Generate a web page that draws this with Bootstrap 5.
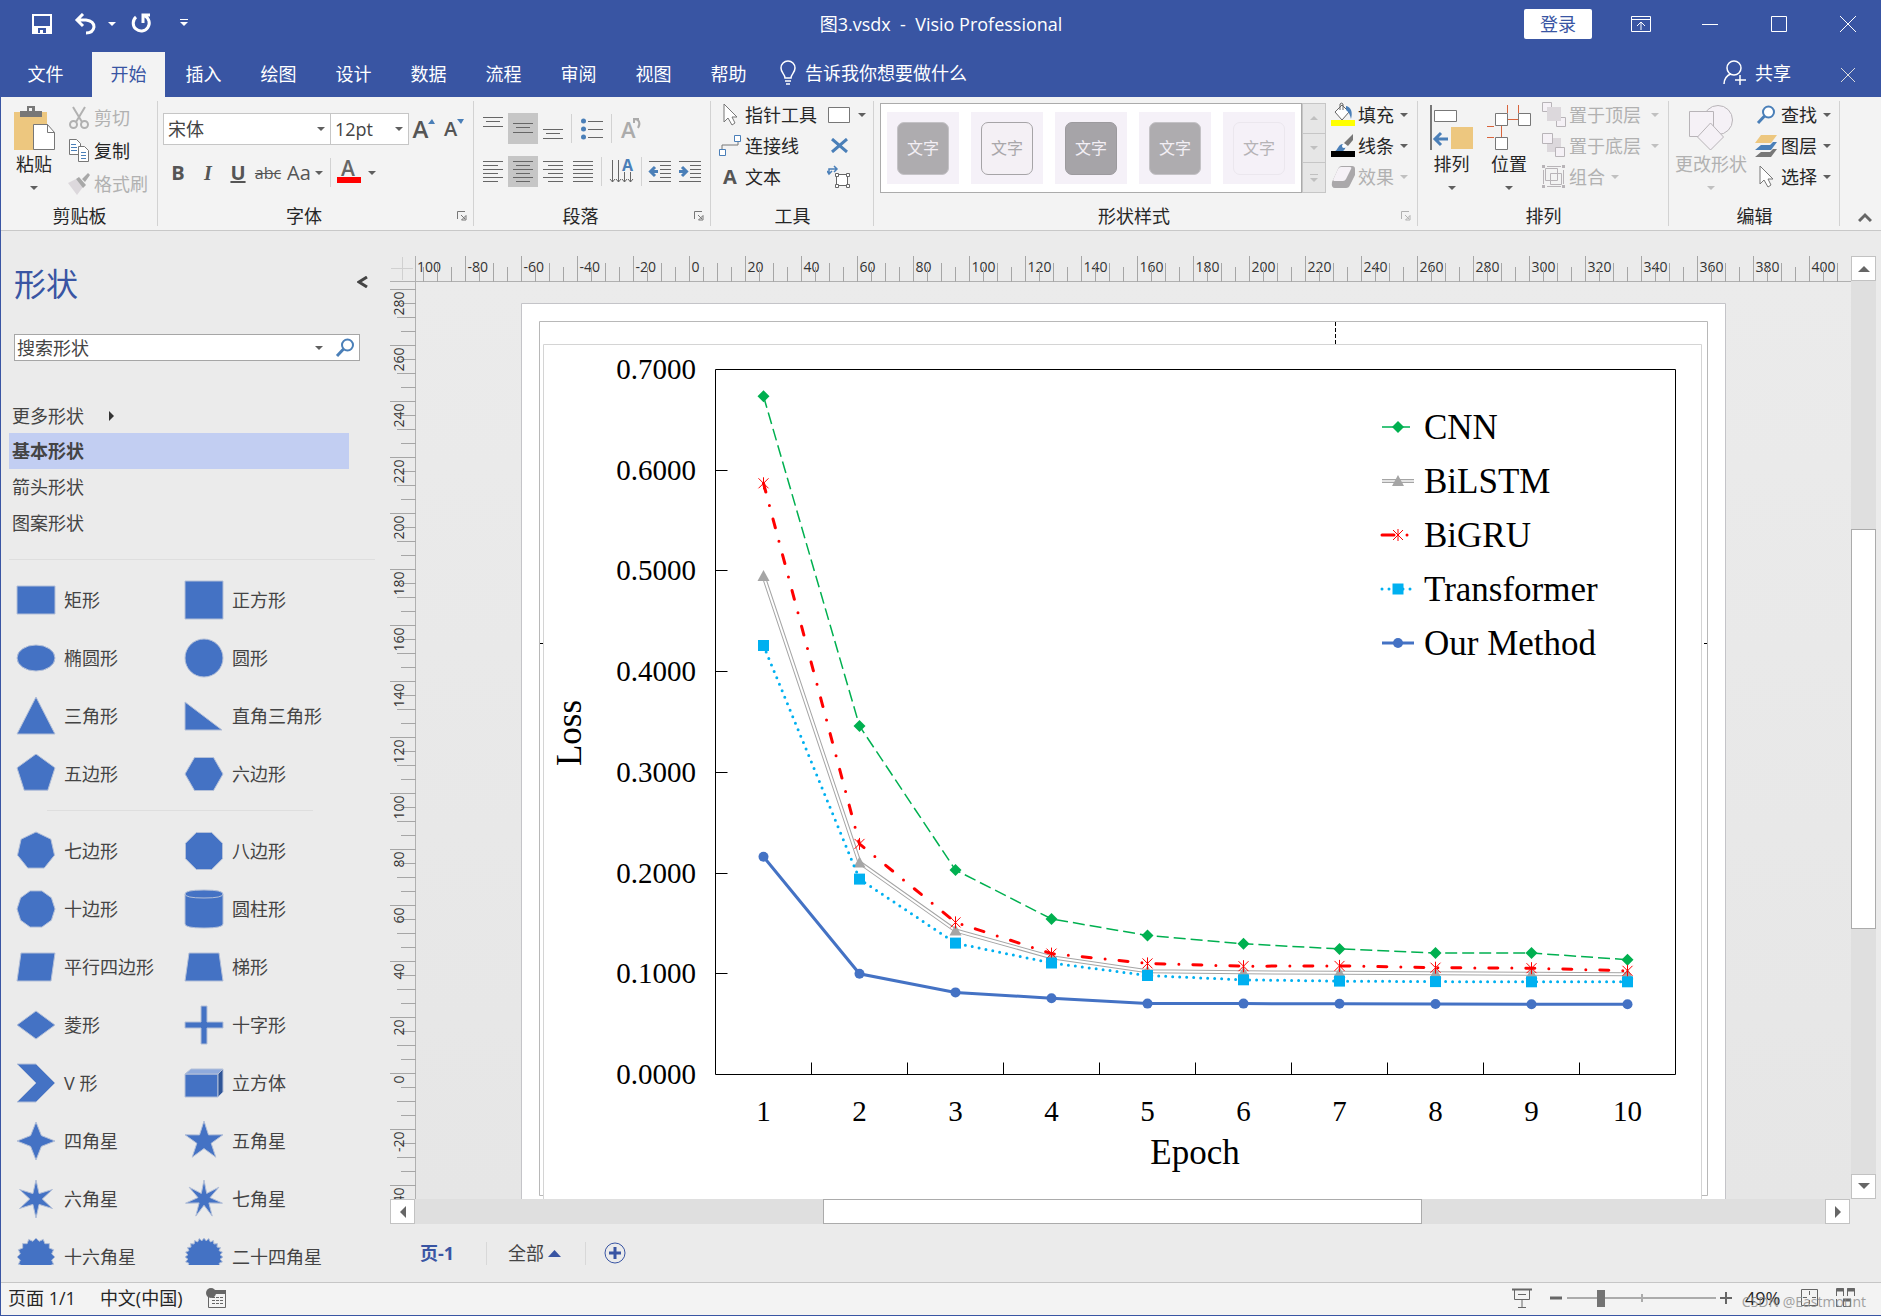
<!DOCTYPE html>
<html lang="zh-CN">
<head>
<meta charset="utf-8">
<meta name="viewport" content="width=device-width, initial-scale=1">
<title>图3.vsdx - Visio Professional</title>
<link href="https://cdn.jsdelivr.net/npm/bootstrap@5.3.0/dist/css/bootstrap.min.css" rel="stylesheet">
<style>
:root{--brand:#3955a3;--line:#c8c8c8;--ink:#262626;--off:#b1b1b1;--icon:#666}
body{font-family:"Open Sans","Noto Sans CJK SC",sans-serif;font-size:18px;line-height:24px;color:var(--ink);background:#ebebeb}
svg{display:block;flex:none}
.app{border-left:1px solid var(--brand);border-bottom:1px solid var(--brand);overflow:hidden}
.plain{background:none;border:0;padding:0;color:inherit;display:flex;align-items:center;white-space:nowrap}
.plain:disabled{color:var(--off)}
/* title bar and tabs */
.chrome{background:var(--brand);color:#fff}
.titlebar{height:52px;padding-bottom:4px}
.doc-title{font-size:18px}
.quick{width:500px;padding-left:31px}
.wins{width:500px}
.login{background:#fff;color:var(--brand);width:68px;height:30px;border-radius:2px;justify-content:center;margin-right:14px}
.winbtn{width:69px;justify-content:center}
.winbtn:last-child{margin-right:-1px}
.tabs .nav-link{width:73px;height:45px;padding:0 0 2px;display:flex;align-items:center;justify-content:center;color:#fff;border-radius:0}
.tabs .nav-link.active{background:#f3f3f3;color:var(--brand)}
.tabs{gap:2px;padding-left:8px}
.tabs .file-tab{margin-right:8px}
/* ribbon */
.ribbon{background:#f3f3f3;border-bottom:1px solid var(--line);height:134px}
.grp{position:relative;display:flex;flex-direction:column;flex:none}
.grp::after{content:"";position:absolute;right:0;top:4px;bottom:4px;width:1px;background:#d2d2d2}
.grp-body{height:107px;display:flex}
.grp-label{height:24px;display:flex;align-items:center}
.grp-label span{flex:1;text-align:center}
.launch{width:24px;height:24px;justify-content:center}
.caret{width:0;height:0;border:4px solid transparent;border-top-color:#5f5f5f;border-bottom-width:0;flex:none}
.caret.up{border-top-width:0;border-bottom:4px solid #5f5f5f}
:disabled .caret{border-top-color:#c0c0c0}
:disabled .caret.up{border-bottom-color:#c0c0c0}
.rows3{padding-top:2px}
.rows3 .plain{height:31px}
.rows-clip{padding-top:4px}
.rows-clip .plain{height:33px}
.ico{width:24px;display:flex;justify-content:center;flex:none;margin-right:3px}
.big{flex-direction:column;padding-top:8px;align-self:flex-start}
.big svg{height:45px}
.big span{margin:2px 0 10px}
.combo{height:32px;border:1px solid #c6c6c6;background:#fff;display:flex;align-items:center;padding:0 5px 0 4px}
.combo+.combo{margin-left:-1px}
.combo select{appearance:none;border:0;background:none;flex:1;min-width:0;padding:0;color:#444;outline:0}
.tool{width:30px;height:31px;justify-content:center}
.tool svg{overflow:visible}
.tool.on{background:#c6c6c6}
.tool.wide{width:33px}
.vsep{width:1px;height:29px;background:#d2d2d2;margin:0 3px;align-self:center}
.fmt{color:#555;font-weight:700;font-size:20px}
.gallery{height:90px;margin-top:6px;border:1px solid #ababab;background:#fff;padding:8px 6px;gap:12px;overflow:hidden}
.swatch{width:72px;height:72px;background:#f5f1f8;flex:none;justify-content:center}
.swatch span{width:52px;height:53px;border-radius:7px;display:flex;align-items:center;justify-content:center;font-size:16px;color:#f3eff5;background:#aeacaf;border:1px solid #c4c2c6}
.swatch .line{background:#f4f0f5;border-color:#a6a4a7;color:#a9a7aa}
.swatch .dark{background:#a6a4a8;border-color:#9c9a9e}
.swatch .ghost{background:none;border-color:#ebe7ee;color:#b5b3b6}
.gscroll{margin-top:6px;width:24px;height:90px}
.gscroll button{flex:1;justify-content:center;background:#e6e6e6;border:1px solid #c6c6c6;margin-top:-1px;flex-direction:column;gap:3px}
.gscroll button:first-child{margin-top:0}
.gscroll .bar{width:8px;height:1px;background:#c0c0c0}
/* shapes panel */
.panel{width:389px;flex:none;color:#444}
.panel h1{font-size:32px;line-height:38px;font-weight:400;color:var(--brand);margin:0}
.search{margin:31px 30px 38px 13px;height:28px;border:1px solid #a6a6a6;background:#fff;padding:0 4px 0 2px}
.search input{border:0;padding:0;background:none;flex:1;min-width:0;color:#444;outline:0;height:24px}
.search input::placeholder{color:#444;opacity:1}
.stencil a{display:flex;align-items:center;height:36px;padding-left:3px;color:#444;text-decoration:none}
.stencil a:first-child{height:34px}
.stencil a.current{background:#c2cef2;font-weight:700}
.stencil{margin:0 41px 0 8px}
.rule{height:1px;background:#dedede}
.shapes{overflow:hidden;min-height:0;margin-bottom:17px;padding:11px 0 0 15px}
.shape{width:168px;height:58px;gap:8px}
.shape-grid{width:336px}
/* drawing area */
.ruler-text{font-size:14px;fill:#333}
.canvas{background:linear-gradient(#ebebeb,#e6e6e6)}
.chart-text{font-family:"Liberation Serif",serif;font-size:29px;fill:#000}
.chart-big{font-size:35px}
.track{background:#dfdfdf}
.sbtn{background:#fff;border:1px solid #c2c2c2;width:25px;height:25px;justify-content:center;flex:none}
.thumb{background:#fff;border:1px solid #ababab}
.pages{height:58px;padding-left:30px}
.pages i{width:1px;height:23px;background:#d8d8d8}
/* status bar */
.status{height:33px;background:#f3f3f3;border-top:1px solid #c6c6c6;padding:0 0 2px 7px}
.zoomer{appearance:none;width:149px;height:18px;background:linear-gradient(#ababab,#ababab) 0 8px/100% 2px no-repeat,linear-gradient(#ababab,#ababab) 74px 5px/2px 8px no-repeat}
.zoomer::-webkit-slider-thumb{appearance:none;width:8px;height:17px;background:#737373}
.credit{position:absolute;right:15px;bottom:3px;font-size:14px;line-height:20px;color:#8c8c8c;opacity:.8}
</style>
<script src="https://cdn.jsdelivr.net/npm/bootstrap@5.3.0/dist/js/bootstrap.bundle.min.js"></script>
</head>
<body>
<svg width="0" height="0" class="position-absolute">
  <symbol id="launcher" viewBox="0 0 10 10"><path d="M.5 8V.5H8M4 4l4 4M9 4.500V9H4.500z" fill="none" stroke="currentColor"/></symbol>
  <symbol id="cursor" viewBox="0 0 16 24"><path d="M2 1v18l4-4 4 7 3-2-3-6h5z" fill="#fff" stroke="#777"/></symbol>
  <symbol id="lens" viewBox="0 0 20 20"><circle cx="12.500" cy="7" r="5.500" fill="#fff" stroke="#4a7fb8" stroke-width="2"/><path d="M8.500 11 2 18" stroke="#4a7fb8" stroke-width="3"/></symbol>
</svg>
<div class="app vh-100 d-flex flex-column">

  <header class="chrome flex-shrink-0">
    <div class="titlebar d-flex align-items-center justify-content-between">
      <div class="quick d-flex align-items-center">
        <button class="plain" aria-label="保存"><svg width="20" height="20"><path d="M1 1h18v18H1z" fill="none" stroke="#fff" stroke-width="2"/><path d="M2 12h16v7H2z" fill="#fff"/><path d="M6 14h8v5h-3v-3H8v3H6z" fill="#3955a3"/><path d="M8 16h3v3H8z" fill="#fff"/></svg></button>
        <button class="plain" style="margin-left:22px" aria-label="撤消"><svg width="22" height="22"><path d="M3 7h9q8 1 8 7-1 6-8 6M9 1 3 7l6 6" fill="none" stroke="#fff" stroke-width="3"/></svg></button>
        <span class="caret" style="border-top-color:#fff;margin-left:12px"></span>
        <button class="plain" style="margin-left:14px" aria-label="重复"><svg width="22" height="22"><path d="M6 4a8 8 0 1 0 9-1M13 10V2h7" fill="none" stroke="#fff" stroke-width="3"/></svg></button>
        <button class="plain" style="margin-left:28px" aria-label="自定义快速访问工具栏"><svg width="8" height="12"><path d="M0 1.500h8" stroke="#fff"/><path d="M0 4h8L4 8z" fill="#fff"/></svg></button>
      </div>
      <div class="doc-title text-nowrap">图3.vsdx&nbsp; -&nbsp; Visio Professional</div>
      <div class="wins d-flex justify-content-end align-items-center">
        <button class="plain login">登录</button>
        <button class="plain winbtn" aria-label="功能区显示选项"><svg width="20" height="16" fill="none" stroke="#fff"><path d="M.5.5h19v15H.5zM.5 3.500h19M10 14V6M6 10l4-4 4 4"/></svg></button>
        <button class="plain winbtn" aria-label="最小化"><svg width="16" height="16"><path d="M0 8.500h16" stroke="#fff"/></svg></button>
        <button class="plain winbtn" aria-label="最大化"><svg width="16" height="16"><path d="M.5.5h15v15H.5z" fill="none" stroke="#fff"/></svg></button>
        <button class="plain winbtn" aria-label="关闭"><svg width="16" height="16"><path d="m0 0 16 16M16 0 0 16" stroke="#fff"/></svg></button>
      </div>
    </div>
    <div class="d-flex align-items-center">
      <nav class="nav tabs flex-nowrap">
        <a class="nav-link file-tab" href="#">文件</a><a class="nav-link active" href="#">开始</a><a class="nav-link" href="#">插入</a><a class="nav-link" href="#">绘图</a><a class="nav-link" href="#">设计</a><a class="nav-link" href="#">数据</a><a class="nav-link" href="#">流程</a><a class="nav-link" href="#">审阅</a><a class="nav-link" href="#">视图</a><a class="nav-link" href="#">帮助</a>
      </nav>
      <button class="plain pb-1" style="margin-left:14px"><svg width="18" height="26" class="me-1" fill="none" stroke="#fff" stroke-width="1.500"><path d="M6 18c0-4-4-5-4-10a7 7 0 0 1 14 0c0 5-4 6-4 10zM6 21h6M7 24h4"/></svg><span class="ps-1">告诉我你想要做什么</span></button>
      <button class="plain pb-1 ms-auto"><svg width="24" height="26" class="me-2" fill="none" stroke="#fff" stroke-width="1.500"><circle cx="11" cy="8" r="7"/><path d="M1 24c0-5 3-9 7-10M17 15v10M12 20h11"/></svg>共享</button>
      <button class="plain winbtn" style="margin-left:22px" aria-label="关闭文档"><svg width="16" height="16"><path d="m1 1 14 14M15 1 1 15" stroke="#ddd"/></svg></button>
    </div>
  </header>

  <section class="ribbon d-flex flex-shrink-0" aria-label="功能区">
    <div class="grp" style="width:157px">
      <div class="grp-body">
        <button class="plain big" style="width:66px"><svg width="42" height="45"><path d="M1 7h33v38H1z" fill="#edc77f"/><path d="M7 12V6h7V1h8v5h7v6z" fill="#777"/><path d="M16 3h3v3h-3z" fill="#f3f3f3"/><path d="M20.500 19.500h14l7 8v17h-21z" fill="#fff" stroke="#777"/><path d="M34.500 19.500v8h7" fill="none" stroke="#777"/></svg><span>粘贴</span><i class="caret"></i></button>
        <div class="rows-clip">
          <button class="plain" disabled><i class="ico"><svg width="20" height="24" fill="none" stroke="#b1b1b1" stroke-width="2"><path d="M4 1l9 15M16 1 7 16"/><circle cx="4.500" cy="18.500" r="3.500"/><circle cx="15.500" cy="18.500" r="3.500"/></svg></i>剪切</button>
          <button class="plain"><i class="ico"><svg width="22" height="24" fill="#fff" stroke="#777"><path d="M1.500.5h7l4 4v11h-11z"/><path d="M10.500 7.500h6l4 4v11h-10z"/><path d="M3 5.500h5M3 8.500h6M3 11.500h6M13 13.500h5M13 16.500h5M13 19.500h5" stroke="#4a7fb8"/></svg></i>复制</button>
          <button class="plain" disabled><i class="ico"><svg width="22" height="22"><path d="M0 10 8 6l7 8-6 8z" fill="#dcd8dc"/><path d="m8 6 3-2 7 8-3 3zM14 6l6-6 2 2-5 7z" fill="#a8a8a8"/></svg></i>格式刷</button>
        </div>
      </div>
      <div class="grp-label"><span>剪贴板</span></div>
    </div>

    <div class="grp" style="width:316px">
      <div class="grp-body flex-column" style="padding:16px 0 0 5px">
        <div class="d-flex align-items-center">
          <div class="combo" style="width:168px"><select aria-label="字体"><option>宋体</option></select><i class="caret"></i></div>
          <div class="combo" style="width:79px"><select aria-label="字号"><option>12pt</option></select><i class="caret"></i></div>
          <button class="plain tool" aria-label="增大字号"><span class="fmt fs-4 fw-semibold">A</span><svg width="7" height="20"><path d="M0 5h7L4 0z" fill="#4a7fb8"/></svg></button>
          <button class="plain tool" aria-label="减小字号"><span class="fmt fw-semibold">A</span><svg width="7" height="20"><path d="M0 0h7L4 5z" fill="#4a7fb8"/></svg></button>
        </div>
        <div class="d-flex align-items-center mt-2 pt-1">
          <button class="plain tool fmt">B</button>
          <button class="plain tool fmt fst-italic" style="font-family:'Liberation Serif',serif">I</button>
          <button class="plain tool fmt text-decoration-underline">U</button>
          <button class="plain tool fmt fw-normal fs-6 text-decoration-line-through">abc</button>
          <button class="plain tool fmt fw-normal" style="width:44px"><span class="me-1">Aa</span><i class="caret"></i></button>
          <i class="vsep"></i>
          <button class="plain tool" aria-label="字体颜色"><svg width="24" height="23"><text x="4" y="15" font-size="21" font-weight="600" fill="#666">A</text><path d="M0 16h24v6H0z" fill="red"/></svg></button>
          <button class="plain" aria-label="更多颜色" style="width:16px"><i class="caret mx-auto"></i></button>
        </div>
      </div>
      <div class="grp-label"><span>字体</span><button class="plain launch" aria-label="字体设置"><svg width="10" height="10" color="#777"><use href="#launcher"/></svg></button></div>
    </div>

    <div class="grp" style="width:237px">
      <div class="grp-body flex-column" style="padding:16px 0 0 4px">
        <div class="d-flex align-items-center">
          <button class="plain tool" aria-label="顶端对齐"><svg width="20" height="24" stroke="#666"><path d="M0 .5h20M3 4.500h14M0 9.500h20"/></svg></button>
          <button class="plain tool on" aria-label="中部对齐"><svg width="20" height="24" stroke="#666"><path d="M0 6.500h20M3 10.500h14M0 15.500h20"/></svg></button>
          <button class="plain tool" aria-label="底端对齐"><svg width="20" height="24" stroke="#666"><path d="M0 12.500h20M3 16.500h14M0 21.500h20"/></svg></button>
          <i class="vsep"></i>
          <button class="plain tool wide" aria-label="项目符号"><svg width="22" height="22"><g fill="#4a7fb8"><circle cx="2.500" cy="3" r="2.500"/><circle cx="2.500" cy="11" r="2.500"/><circle cx="2.500" cy="19" r="2.500"/></g><path d="M7 3.500h15M7 11.500h15M7 19.500h15" stroke="#666"/></svg></button>
          <i class="vsep"></i>
          <button class="plain tool wide" disabled aria-label="旋转文本"><svg width="22" height="22"><text x="0" y="20" font-size="22" font-weight="600" fill="#ababab">A</text><path d="M13 5V1h5M13 1c5 0 7 4 4 9" fill="none" stroke="#ababab" stroke-width="2"/></svg></button>
        </div>
        <div class="d-flex align-items-center mt-2 pt-1">
          <button class="plain tool" aria-label="左对齐"><svg width="20" height="21" stroke="#666"><path d="M0 .5h20M0 4.500h15M0 8.500h20M0 12.500h15M0 16.500h20M0 20.500h15"/></svg></button>
          <button class="plain tool on" aria-label="居中"><svg width="20" height="21" stroke="#666"><path d="M0 .5h20M3 4.500h14M0 8.500h20M3 12.500h14M0 16.500h20M3 20.500h14"/></svg></button>
          <button class="plain tool" aria-label="右对齐"><svg width="20" height="21" stroke="#666"><path d="M0 .5h20M5 4.500h15M0 8.500h20M5 12.500h15M0 16.500h20M5 20.500h15"/></svg></button>
          <button class="plain tool" aria-label="两端对齐"><svg width="20" height="21" stroke="#666"><path d="M0 .5h20M0 4.500h20M0 8.500h20M0 12.500h20M0 16.500h20M0 20.500h20"/></svg></button>
          <i class="vsep"></i>
          <button class="plain tool wide" aria-label="文字方向"><svg width="24" height="25"><path d="M2.500 1v22M8.500 1v22M14.500 13v10M20.500 13v10M0 20l2.500 3 2.500-3M6 20l2.500 3 2.500-3M12 20l2.500 3 2.500-3M18 20l2.500 3 2.500-3" fill="none" stroke="#666"/><text x="12" y="12" font-size="16" font-weight="700" fill="#4a7fb8">A</text></svg></button>
          <i class="vsep"></i>
          <button class="plain tool" aria-label="减少缩进"><svg width="22" height="21"><path d="M0 .5h22M11 4.500h11M11 8.500h11M11 12.500h11M11 16.500h11M0 20.500h22" stroke="#666"/><path d="M9 10.500H2M6 6l-4.500 4.500L6 15" fill="none" stroke="#4a7fb8" stroke-width="3"/></svg></button>
          <button class="plain tool" aria-label="增加缩进"><svg width="22" height="21"><path d="M0 .5h22M11 4.500h11M11 8.500h11M11 12.500h11M11 16.500h11M0 20.500h22" stroke="#666"/><path d="M0 10.500h7M3 6l4.500 4.500L3 15" fill="none" stroke="#4a7fb8" stroke-width="3"/></svg></button>
        </div>
      </div>
      <div class="grp-label"><span>段落</span><button class="plain launch" aria-label="段落设置"><svg width="10" height="10" color="#777"><use href="#launcher"/></svg></button></div>
    </div>

    <div class="grp" style="width:163px">
      <div class="grp-body" style="padding-left:7px">
        <div class="rows3">
          <button class="plain"><i class="ico"><svg width="16" height="24"><use href="#cursor"/></svg></i>指针工具</button>
          <button class="plain"><i class="ico"><svg width="22" height="22" fill="#fff"><path d="M3 14v-4h16V7" fill="none" stroke="#777"/><path d="M.5 14.500h6v6h-6zM15.500.5h6v6h-6z" stroke="#4a7fb8"/></svg></i>连接线</button>
          <button class="plain"><i class="ico fmt fst-normal">A</i>文本</button>
        </div>
        <div class="rows3" style="margin-left:10px">
          <button class="plain" aria-label="矩形"><i class="ico"><svg width="22" height="16"><path d="M.5.5h21v15H.5z" fill="#fff" stroke="#777"/></svg></i><i class="caret ms-1"></i></button>
          <button class="plain" aria-label="连接点"><i class="ico"><svg width="17" height="15"><path d="m1 1 15 13M16 1 1 14" stroke="#4a7fb8" stroke-width="3"/></svg></i></button>
          <button class="plain" aria-label="文本块"><i class="ico"><svg width="24" height="23" fill="#fff"><path d="M9.500 9.500h11v11h-11z" stroke="#666"/><path d="M8.500 8.500h3v3h-3zM19.500 8.500h3v3h-3zM8.500 19.500h3v3h-3zM19.500 19.500h3v3h-3z" stroke="#666"/><path d="M2 9V4h8M0 6l2 3 3-3M7 1l3 3-3 3" fill="none" stroke="#4a7fb8" stroke-width="1.500"/></svg></i></button>
        </div>
      </div>
      <div class="grp-label"><span>工具</span></div>
    </div>

    <div class="grp flex-grow-1">
      <div class="grp-body" style="padding-left:6px">
        <div class="gallery d-flex flex-grow-1">
          <button class="plain swatch"><span>文字</span></button>
          <button class="plain swatch"><span class="line">文字</span></button>
          <button class="plain swatch"><span class="dark">文字</span></button>
          <button class="plain swatch"><span>文字</span></button>
          <button class="plain swatch"><span class="ghost">文字</span></button>
        </div>
        <div class="gscroll d-flex flex-column">
          <button class="plain" disabled aria-label="上一行"><i class="caret up"></i></button>
          <button class="plain" disabled aria-label="下一行"><i class="caret"></i></button>
          <button class="plain" disabled aria-label="更多样式"><i class="bar"></i><i class="caret"></i></button>
        </div>
        <div class="rows3" style="padding-left:5px;padding-right:10px">
          <button class="plain"><i class="ico"><svg width="24" height="25"><path d="m4 10 7-7 7 7-7 8z" fill="#fff" stroke="#666"/><path d="M9 8V2a2 2 0 0 1 3 0v6" fill="none" stroke="#666"/><path d="M15 4c5 1 7 6 5 13-1-4-2-7-5-9z" fill="#4a7fb8"/><path d="M0 18h24v6H0z" fill="#ff0"/></svg></i>填充<i class="caret" style="margin-left:6px"></i></button>
          <button class="plain"><i class="ico"><svg width="24" height="24"><path d="M22 0v6l-5 6-4-3z" fill="#777"/><path d="M4 17c3-1 3-7 8-7 3 2 3 5 0 7z" fill="#4a7fb8"/><circle cx="13" cy="12" r="2" fill="#fff"/><path d="M0 17h24v6H0z"/></svg></i>线条<i class="caret" style="margin-left:6px"></i></button>
          <button class="plain" disabled><i class="ico"><svg width="24" height="22"><path d="m1 16 6-13q1-3 4-3h10q3 0 3 3v6l-5 10q-1 3-4 3H4q-4 0-3-6z" fill="#aaa8aa"/><path d="M2 14 7 3q1-2 3-2h9q2 0 1 2l-5 10q-1 2-3 2H3z" fill="#f5f1f6"/></svg></i>效果<i class="caret" style="margin-left:6px"></i></button>
        </div>
      </div>
      <div class="grp-label"><span>形状样式</span><button class="plain launch" disabled aria-label="形状样式设置"><svg width="10" height="10"><use href="#launcher"/></svg></button></div>
    </div>

    <div class="grp" style="width:251px">
      <div class="grp-body" style="padding-left:5px">
        <button class="plain big" style="width:57px"><svg width="44" height="45"><path d="M1 0v45" stroke="#777" stroke-width="2"/><path d="M4.500 5.500h22v11h-22z" fill="#fff" stroke="#777"/><path d="M21 22h22v22H21z" fill="#edc77f"/><path d="M18 34H6M11 28l-6 6 6 6" fill="none" stroke="#4a7fb8" stroke-width="3"/></svg><span>排列</span><i class="caret"></i></button>
        <button class="plain big" style="width:58px"><svg width="44" height="45"><path d="M20.500 0v8M31.500 0v8M20 14.500h12M14.500 21v11M0 21.500h7M0 32.500h7" stroke="#d9643c"/><path d="M8.500 8.500h12v12h-12zM31.500 8.500h12v12h-12zM8.500 32.500h12v12h-12z" fill="#fff" stroke="#777"/></svg><span>位置</span><i class="caret"></i></button>
        <div class="rows3 ps-1">
          <button class="plain" disabled><i class="ico"><svg width="24" height="25" fill="#f5f1f6" stroke="#b8b4b8"><path d="M.5.5h9v9h-9zM14.500 15.500h9v9h-9z"/><path d="M5 5h14v14H5z" fill="#dcd8dc" stroke="none"/></svg></i>置于顶层<i class="caret" style="margin-left:10px"></i></button>
          <button class="plain" disabled><i class="ico"><svg width="24" height="25" fill="#f5f1f6" stroke="#b8b4b8"><path d="M5 5h14v14H5z" fill="#dcd8dc" stroke="none"/><path d="M.5.5h10v10H.5zM13.500 14.500h9v9h-9z"/></svg></i>置于底层<i class="caret" style="margin-left:10px"></i></button>
          <button class="plain" disabled><i class="ico"><svg width="24" height="24" fill="none" stroke="#b8b4b8"><path d="M3.500 3.500h12v12h-12zM8.500 8.500h11v11h-11zM1.500 5v14M5 1.500h14M21.500 5v14M5 21.500h14"/><path d="M0 0h3v3H0zM20 0h3v3h-3zM0 20h3v3H0zM20 20h3v3h-3z" fill="#b8b4b8" stroke="none"/></svg></i>组合<i class="caret" style="margin-left:6px"></i></button>
        </div>
      </div>
      <div class="grp-label"><span>排列</span></div>
    </div>

    <div class="grp" style="width:171px">
      <div class="grp-body" style="padding-left:5px">
        <button class="plain big" disabled style="width:74px"><svg width="44" height="45" fill="#f5f1f6" stroke="#b8b4b8"><circle cx="29" cy="15" r="14.500"/><path d="M.5 6.500h24v25H.5z"/><path d="m21.500 18 13 14-13 13-13-13z"/></svg><span>更改形状</span><i class="caret"></i></button>
        <div class="rows3" style="padding-left:6px">
          <button class="plain"><i class="ico"><svg width="20" height="20"><use href="#lens"/></svg></i>查找<i class="caret" style="margin-left:6px"></i></button>
          <button class="plain"><i class="ico"><svg width="24" height="22"><path d="M7 0h16l-6 8H1z" fill="#edc77f"/><path d="m7 10-6 5h16l6-8h-4l-3 3z" fill="#4a7fb8"/><path d="m7 17-6 5h16l6-8h-4l-3 3z" fill="#777"/></svg></i>图层<i class="caret" style="margin-left:6px"></i></button>
          <button class="plain"><i class="ico"><svg width="16" height="24"><use href="#cursor"/></svg></i>选择<i class="caret" style="margin-left:6px"></i></button>
        </div>
      </div>
      <div class="grp-label"><span>编辑</span></div>
    </div>
    <button class="plain align-self-end justify-content-center pb-2" style="width:50px;margin-right:-9px" aria-label="折叠功能区"><svg width="14" height="10"><path d="m1 9 6-6 6 6" fill="none" stroke="#666" stroke-width="3"/></svg></button>
  </section>

  <main class="d-flex flex-grow-1" style="min-height:0">
    <aside class="panel d-flex flex-column">
      <div class="d-flex align-items-center justify-content-between" style="padding:34px 22px 0 13px"><h1>形状</h1><button class="plain pb-1" aria-label="折叠形状窗口"><svg width="11" height="12"><path d="m10 1-8 5 8 5" fill="none" stroke="#444" stroke-width="3"/></svg></button></div>
      <form class="search d-flex align-items-center"><label class="visually-hidden" for="q">搜索形状</label><input id="q" placeholder="搜索形状"><i class="caret"></i><button class="plain ms-2 ps-1" aria-label="搜索"><svg width="20" height="20"><use href="#lens"/></svg></button></form>
      <nav class="stencil"><a href="#">更多形状<svg width="6" height="10" style="margin-left:25px"><path d="M0 0v10l5-5z" fill="#333"/></svg></a><a class="current" href="#">基本形状</a><a href="#">箭头形状</a><a href="#">图案形状</a></nav>
      <div class="rule" style="margin:18px 15px 0 8px"></div>
      <div class="shapes flex-grow-1">
        <div class="shape-grid d-flex flex-wrap" id="common"></div>
        <div class="rule" style="margin:7px 77px 11px 31px"></div>
        <div class="shape-grid d-flex flex-wrap" id="more"></div>
      </div>
    </aside>

    <section class="d-flex flex-column flex-grow-1" style="min-width:0;padding:25px 5px 0 0">
      <div class="d-flex flex-grow-1" style="min-height:0">
        <div class="d-flex flex-column flex-grow-1" style="min-width:0">
          <div class="d-flex">
            <svg width="26" height="26"><path d="M1 12.500h22M12.500 1v23" stroke="#d0d0d0"/><path d="M0 25.500h26M25.500 0v26" stroke="#b0b0b0"/></svg>
            <svg class="flex-grow-1" style="width:0" height="26" id="hruler"></svg>
          </div>
          <div class="d-flex flex-grow-1" style="min-height:0">
            <svg width="26" class="h-100" id="vruler"></svg>
            <svg class="canvas flex-grow-1 h-100" style="width:0" id="canvas" role="img" aria-label="Loss / Epoch"></svg>
          </div>
        </div>
        <div class="track d-flex flex-column" style="width:25px">
          <button class="plain sbtn" aria-label="向上滚动"><svg width="12" height="6"><path d="M0 6h12L6 0z" fill="#666"/></svg></button>
          <div style="flex:248"></div><div class="thumb" style="flex:399"></div><div style="flex:245"></div>
          <button class="plain sbtn" aria-label="向下滚动"><svg width="12" height="6"><path d="M0 0h12L6 6z" fill="#666"/></svg></button>
        </div>
      </div>
      <div class="track d-flex" style="height:25px;flex:none;margin-right:26px">
        <button class="plain sbtn" aria-label="向左滚动"><svg width="6" height="12"><path d="M6 0v12L0 6z" fill="#666"/></svg></button>
        <div style="flex:409"></div><div class="thumb" style="flex:597"></div><div style="flex:404"></div>
        <button class="plain sbtn" aria-label="向右滚动"><svg width="6" height="12"><path d="M0 0v12l6-6z" fill="#666"/></svg></button>
      </div>
      <div class="pages d-flex align-items-center flex-shrink-0">
        <button class="plain fw-bold" style="color:var(--brand)">页-1</button><i style="margin:0 21px 0 32px"></i>
        <button class="plain" style="color:#444">全部<svg width="13" height="7" class="ms-1"><path d="M0 7h13L6.500 0z" fill="#3955a3"/></svg></button><i style="margin:0 18px 0 24px"></i>
        <button class="plain" aria-label="插入页"><svg width="22" height="22"><circle cx="11" cy="11" r="10" fill="none" stroke="#3955a3"/><path d="M11 5v12M5 11h12" stroke="#3955a3" stroke-width="3"/></svg></button>
      </div>
    </section>
  </main>

  <footer class="status d-flex align-items-center position-relative flex-shrink-0">
    <span>页面 1/1</span><span style="margin-left:24px">中文(中国)</span>
    <button class="plain" style="margin-left:23px" aria-label="宏录制"><svg width="22" height="20"><path d="M2.500 8v11.500h17V3" fill="none" stroke="#666"/><path d="M9 2h11v4H9z" fill="#666"/><circle cx="5" cy="5" r="5" fill="#666"/><path d="M6 9.500h12M6 12.500h12M6 15.500h12" stroke="#666" stroke-dasharray="3 1"/></svg></button>
    <button class="plain ms-auto" aria-label="演示模式"><svg width="20" height="20" fill="none" stroke="#666"><path d="M0 1.500h20" stroke-width="2"/><path d="M2.500 2v9.500h15V2M6 6.500h8M10 12v7M6 19.500h8"/></svg></button>
    <button class="plain" style="margin-left:18px" aria-label="缩小"><svg width="12" height="12"><path d="M0 6h12" stroke="#666" stroke-width="3"/></svg></button>
    <input type="range" class="zoomer" style="margin:0 4px 0 5px" value="21" aria-label="缩放级别">
    <button class="plain" aria-label="放大"><svg width="12" height="12"><path d="M0 6h12M6 0v12" stroke="#666" stroke-width="2"/></svg></button>
    <button class="plain" style="margin-left:13px;width:40px">49%</button>
    <button class="plain" style="margin-left:16px" aria-label="适应窗口"><svg width="17" height="18" fill="none" stroke="#666"><path d="M.5.5h16v16H.5z"/><path d="M8.500 2v4M8.500 11v4M2 8.500h4M11 8.500h4"/></svg></button>
    <button class="plain" style="margin:0 25px 0 18px" aria-label="切换窗口"><svg width="20" height="20" fill="none" stroke="#666"><path d="M.5 8V.5h7V8M11.500 8V.5h7V8M7.500 18.500v-7h7v7z"/><path d="M1 2h7M11 2h8M7 12h8" stroke-width="3"/><path d="M.5 11v7.500h5"/></svg></button>
    <span class="credit">CSDN @Eastmount</span>
  </footer>
</div>

<script>
const fmt = n => n.toFixed(1);
// points round a centre; with an inner radius every second point moves inwards
function ring(n, r, inner, start) {
  const count = inner ? n * 2 : n, out = [];
  for (let i = 0; i < count; i++) {
    const a = start + i * 2 * Math.PI / count, q = inner && i % 2 ? r * inner : r;
    out.push(fmt(20 + q * Math.sin(a)) + ',' + fmt(20 - q * Math.cos(a)));
  }
  return `<polygon points="${out.join(' ')}"/>`;
}
const poly = p => `<polygon points="${p}"/>`;
const common = [
  ['矩形', poly('1,6 39,6 39,34 1,34')], ['正方形', poly('1,1 39,1 39,39 1,39')],
  ['椭圆形', '<ellipse cx="20" cy="20" rx="19" ry="13"/>'], ['圆形', '<circle cx="20" cy="20" r="19"/>'],
  ['三角形', poly('20,1 39,38 1,38')], ['直角三角形', poly('1,6 38,34 1,34')],
  ['五边形', ring(5, 20, 0, 0)], ['六边形', ring(6, 19, 0, Math.PI / 6)]
];
const more = [
  ['七边形', ring(7, 19, 0, 0)], ['八边形', ring(8, 20, 0, Math.PI / 8)],
  ['十边形', ring(10, 19, 0, Math.PI / 10)],
  ['圆柱形', '<path d="M1 5v30q0 4 19 4t19-4V5q0-4-19-4T1 5q0 4 19 4t19-4"/>'],
  ['平行四边形', poly('5,6 39,6 35,34 1,34')], ['梯形', poly('5,6 35,6 39,34 1,34')],
  ['菱形', poly('20,6 39,20 20,34 1,20')], ['十字形', poly('17,1 23,1 23,17 39,17 39,23 23,23 23,39 17,39 17,23 1,23 1,17 17,17')],
  ['V 形', poly('1,1 20,1 39,20 20,39 1,39 20,20')],
  ['立方体', '<path d="M1 11h33v23H1z"/><path d="M1 11l6-5h32l-5 5z" fill="#8faadc"/><path d="M34 11l5-5v23l-5 5z" fill="#2f5597"/>'],
  ['四角星', ring(4, 19, .4, 0)], ['五角星', ring(5, 20, .38, 0)],
  ['六角星', ring(6, 19, .33, 0)], ['七角星', ring(7, 19, .33, 0)],
  ['十六角星', ring(16, 19, .84, 0)], ['二十四角星', ring(24, 19, .86, 0)]
];
const cell = ([name, art]) => `<div class="shape d-flex align-items-center"><svg width="40" height="40" fill="#4472c4" stroke="#b4c0d8">${art}</svg><span class="text-nowrap">${name}</span></div>`;
document.getElementById('common').innerHTML = common.map(cell).join('');
document.getElementById('more').innerHTML = more.map(cell).join('');

// rulers: a labelled tick every 56px, three smaller ones between
let h = '<path d="M0 25.500h4000" stroke="#b0b0b0"/><text class="ruler-text" x="1" y="16">100</text>', v = '<path d="M25.500 0v4000" stroke="#b0b0b0"/>';
for (let i = -19; i < 120; i++) {
  const k = ((i % 4) + 4) % 4, x = 273.5 + i * 14;
  h += `<path d="M${x} ${[0, 11, 7, 11][k]}V26" stroke="#a6a6a6"/>`;
  if (!k) h += `<text class="ruler-text" x="${x + 2}" y="16">${i * 5}</text>`;
}
for (let i = -16; i < 60; i++) {
  const k = ((i % 4) + 4) % 4, y = 791.5 - i * 14;
  v += `<path d="M${[0, 11, 7, 11][k]} ${y}H26" stroke="#a6a6a6"/>`;
  if (!k) v += `<text class="ruler-text" text-anchor="end" transform="translate(14 ${y + 2}) rotate(-90)">${i * 5}</text>`;
}
document.getElementById('hruler').innerHTML = h;
document.getElementById('vruler').innerHTML = v;

// line chart on the page; plot box 960 x 705
const L = 194.5, T = 66.5, W = 960, H = 705, B = T + H;
const mark = {
  diamond: (x, y) => `<path d="M${x} ${y - 6}l6 6-6 6-6-6z" fill="#00b050"/>`,
  tri: (x, y) => `<path d="M${x} ${y - 6}l6 11h-12z" fill="#a5a5a5"/>`,
  star: (x, y) => `<path d="M${x - 5} ${y - 5}l10 10m0-10l-10 10m5-11v12" stroke="red" fill="none"/>`,
  box: (x, y) => `<path d="M${x - 5.5} ${y - 5.5}h11v11h-11z" fill="#00b0f0"/>`,
  dot: (x, y) => `<circle cx="${x}" cy="${y}" r="5" fill="#4472c4"/>`
};
const series = [
  ['CNN', 'diamond', [.6735, .346, .203, .1545, .138, .1298, .1247, .1205, .1205, .114], 'stroke="#00b050" stroke-width="1.500" stroke-dasharray="12 5"'],
  ['BiLSTM', 'tri', [.495, .2105, .143, .1165, .1025, .1015, .101, .1005, .1, .0995], 'stroke="#a5a5a5" stroke-width="4"'],
  ['BiGRU', 'star', [.587, .229, .151, .12, .1103, .1075, .1078, .106, .1055, .103], 'stroke="red" stroke-width="3" stroke-linecap="round" stroke-dasharray="9 14 0 14"'],
  ['Transformer', 'box', [.426, .194, .1305, .1107, .0983, .094, .0927, .0922, .092, .092], 'stroke="#00b0f0" stroke-width="3" stroke-linecap="round" stroke-dasharray="0 7"'],
  ['Our Method', 'dot', [.2163, .1, .0815, .0757, .0704, .0704, .0703, .07, .0698, .0698], 'stroke="#4472c4" stroke-width="3"']
];
let c = `<g transform="translate(105 21)"><path d="M.5 2000V.5h1204V2000" fill="#fff" stroke="#c4c4c8"/>
<path d="M18.500 18.500h1168v874h-1168z" fill="none" stroke="#b8b8b8"/>
<path d="M22.500 2000V41.500h1158V2000" fill="#fff" stroke="#d4d4d4"/>
<path d="M814.500 19v22" stroke="#000" stroke-dasharray="4 2"/><path d="M19 340.500h3M1183 340.500h3" stroke="#000"/>
<path d="M${L} ${T}h${W}v${H}h-${W}z" fill="none" stroke="#000"/>`;
for (let i = 0; i <= 7; i++) {
  const y = Math.floor(B - i * H / 7);
  if (i && i < 7) c += `<path d="M${L} ${y + .5}h12" stroke="#000"/>`;
  c += `<text class="chart-text" text-anchor="end" x="175" y="${y + 10}">0.${i}000</text>`;
}
for (let i = 1; i <= 10; i++) {
  if (i < 10) c += `<path d="M${L + i * 96} ${B}v-12" stroke="#000"/>`;
  c += `<text class="chart-text" text-anchor="middle" x="${L + i * 96 - 48}" y="818">${i}</text>`;
}
c += `<text class="chart-text chart-big" text-anchor="middle" x="674" y="861">Epoch</text>
<text class="chart-text chart-big" text-anchor="middle" transform="translate(60 430) rotate(-90)">Loss</text>`;
series.forEach(([name, m, vals, style], s) => {
  const pts = vals.map((q, i) => [L + 48 + 96 * i, +fmt(B - q * H / .7)]);
  const d = 'M' + pts.map(p => p.join(' ')).join('L');
  const ly = 124 + s * 54, ld = `M861 ${ly}h${s === 0 ? 28 : 32}`;
  c += `<path d="${d}" fill="none" ${style}/><path d="${ld}" fill="none" ${s === 0 ? 'stroke="#3cc47c" stroke-width="2"' : style.replace('9 14 0 14', '12 13 0 99')}/>`;
  if (m === 'tri') c += `<path d="${d}" fill="none" stroke="#fff" stroke-width="2"/><path d="${ld}" stroke="#e4e4e4" stroke-width="2"/>`;
  c += pts.map(p => mark[m](...p)).join('') + mark[m](877, ly);
  c += `<text class="chart-text chart-big" x="903" y="${ly + 12}">${name}</text>`;
});
document.getElementById('canvas').innerHTML = c + '</g>';
</script>
</body>
</html>
